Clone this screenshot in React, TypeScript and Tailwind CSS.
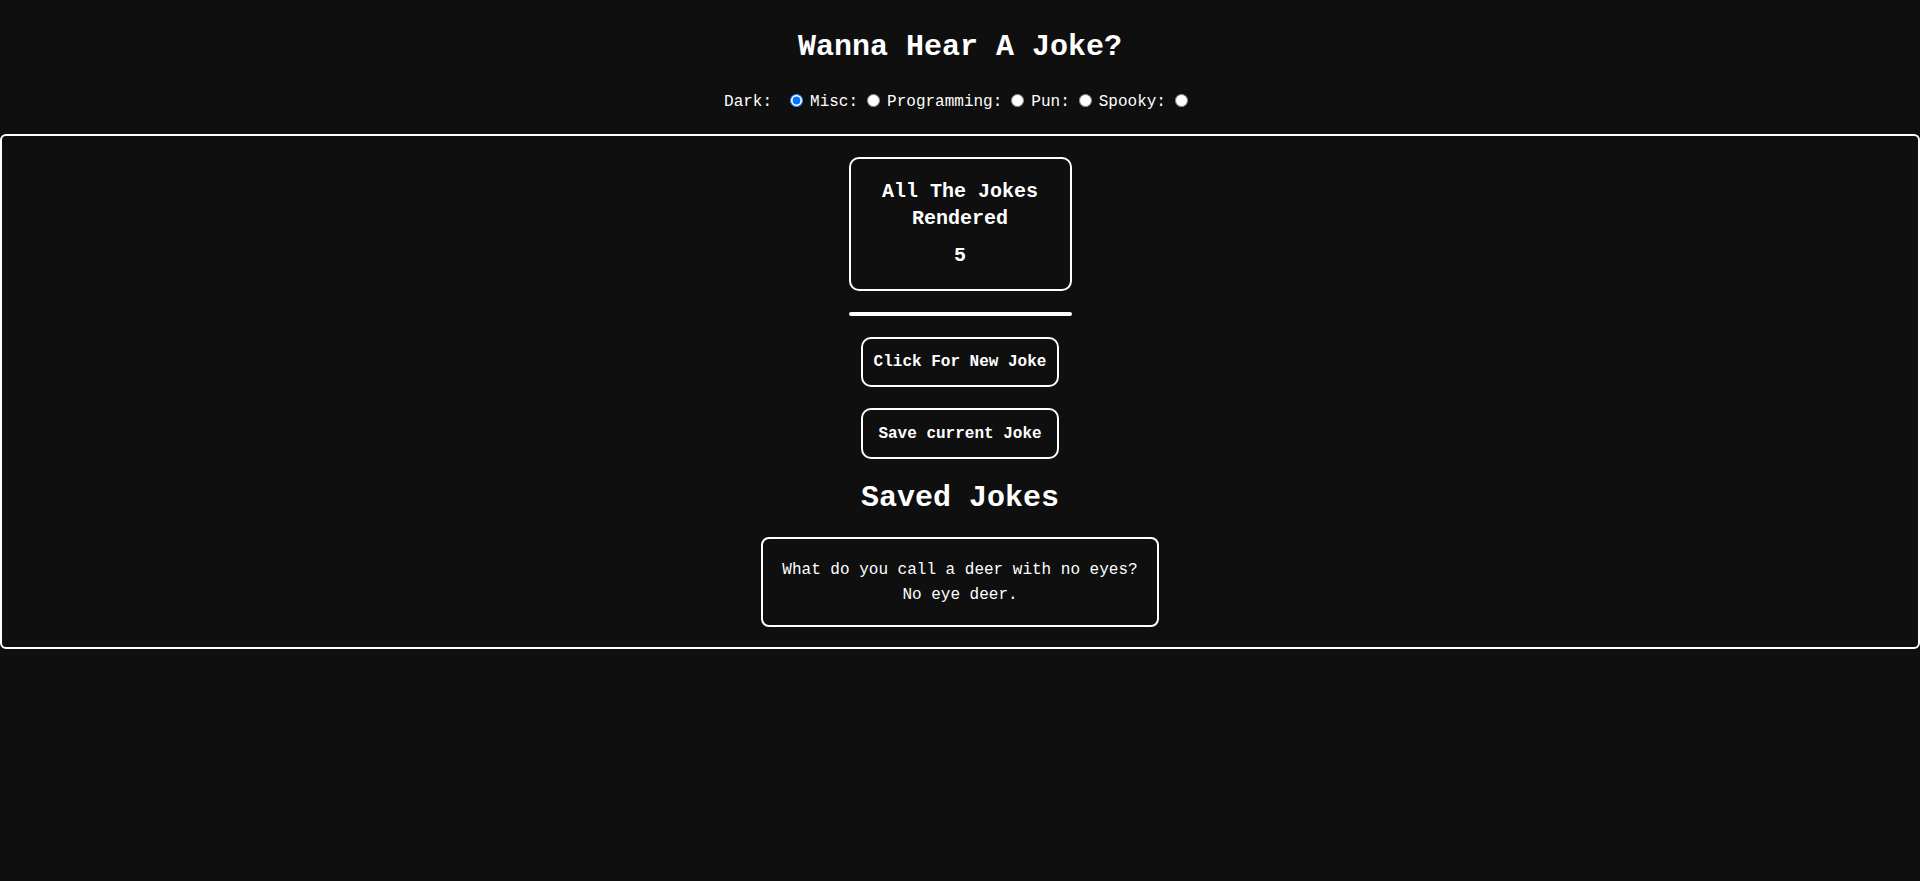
import React, { useState } from 'react';

const categories = ['Dark', 'Misc', 'Programming', 'Pun', 'Spooky'];

const App: React.FC = () => {
  const [category, setCategory] = useState('Dark');
  const [saved] = useState<string[]>(['What do you call a deer with no eyes? No eye deer.']);

  return (
    <div className="min-h-[881px] bg-[#0f0f0f] text-white font-['Liberation_Mono',monospace] pt-[30px]">
      <h1 className="text-center text-[30px] leading-[34px] font-bold">Wanna Hear A Joke?</h1>

      {/* Category picker */}
      <div className="mt-[29px] flex items-center justify-center pr-[8px] text-[16px] leading-[18px]">
        {categories.map((c, i) => (
          <React.Fragment key={c}>
            <label htmlFor={c} className={i === 0 ? '' : 'ml-[7px]'}>
              {c}:
            </label>
            <input
              id={c}
              type="radio"
              name="category"
              checked={category === c}
              onChange={() => setCategory(c)}
              className={`m-0 mb-[3px] h-[13px] w-[13px] ${i === 0 ? 'ml-[18px]' : 'ml-[9px]'}`}
            />
          </React.Fragment>
        ))}
      </div>

      <div className="mt-[23px] border-2 border-white rounded-[6px] pt-[21px] pb-[20px] flex flex-col items-center">
        <div className="w-[223px] border-2 border-white rounded-[10px] pt-[19px] pb-[20px] text-center text-[20px] font-bold leading-[27px]">
          <h3>All The Jokes Rendered</h3>
          <p className="mt-[10px]">{5}</p>
        </div>

        <div className="mt-[21px] h-[4px] w-[223px] rounded-full bg-white" />

        <button className="mt-[21px] h-[50px] w-[198px] border-2 border-white rounded-[10px] text-[16px] font-bold">
          Click For New Joke
        </button>
        <button className="mt-[21px] h-[51px] w-[198px] border-2 border-white rounded-[10px] text-[16px] font-bold">
          Save current Joke
        </button>

        <h2 className="mt-[22px] text-[30px] leading-[34px] font-bold">Saved Jokes</h2>

        {saved.map((joke, i) => (
          <div
            key={i}
            className="mt-[22px] w-[398px] border-2 border-white rounded-[8px] px-[16px] pt-[19px] pb-[17px] text-center text-[16px] leading-[25px]"
          >
            {joke}
          </div>
        ))}
      </div>
    </div>
  );
};

export default App;
